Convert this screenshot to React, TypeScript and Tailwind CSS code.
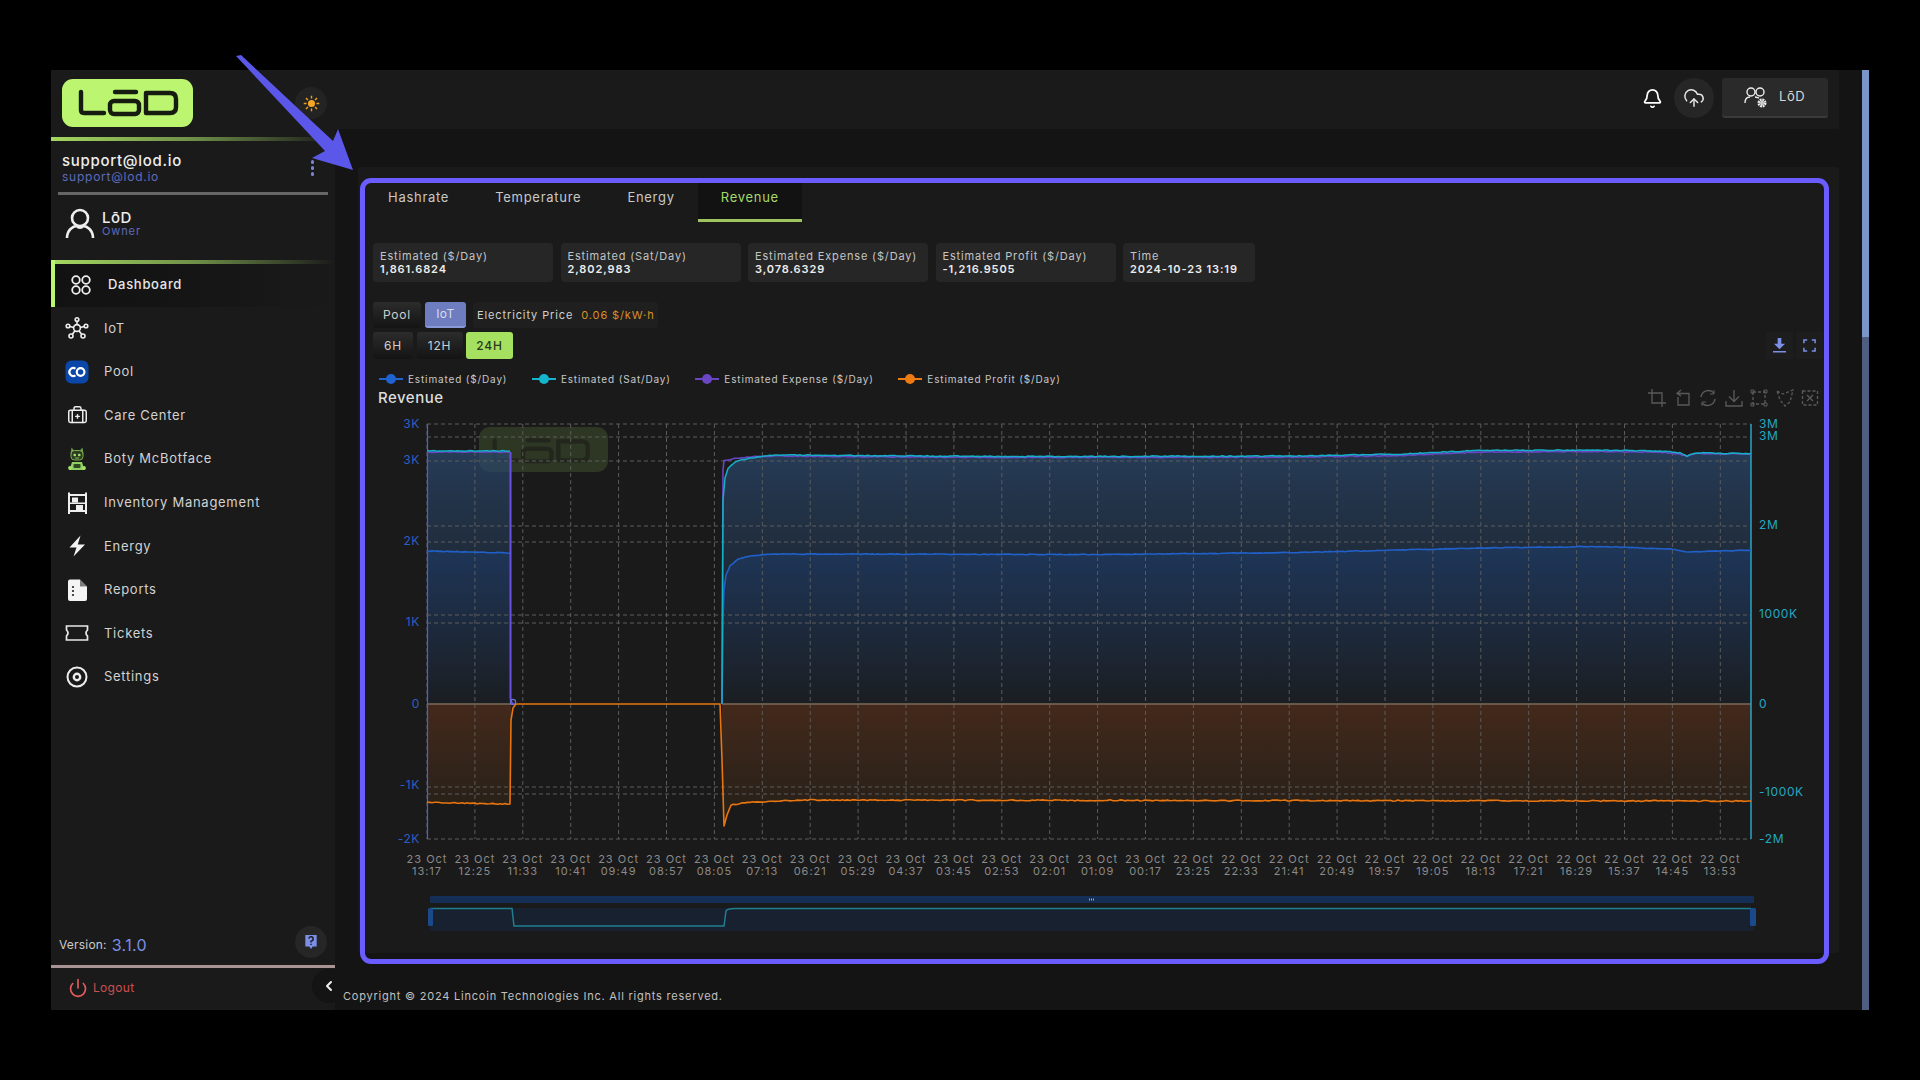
import React from "react";
import { BriefcaseMedical, Power, Bell, CloudUpload, ChevronLeft } from "lucide-react";

function rng(seed: number) {
  let s = seed;
  return () => {
    s = (s * 16807) % 2147483647;
    return s / 2147483647 - 0.5;
  };
}
type P = [number, number];
function series(pts: P[], noise: number, seed: number): P[] {
  const r = rng(seed);
  const out: P[] = [];
  for (let i = 0; i < pts.length - 1; i++) {
    const [x0, y0] = pts[i];
    const [x1, y1] = pts[i + 1];
    const len = x1 - x0;
    const steps = Math.max(1, Math.round(len / 2.5));
    const flat = y0 === 704 && y1 === 704;
    for (let k = 0; k < steps; k++) {
      const t = k / steps;
      const n = len > 6 && !flat ? r() * noise : 0;
      out.push([x0 + len * t, y0 + (y1 - y0) * t + n]);
    }
  }
  out.push(pts[pts.length - 1]);
  return out;
}
const toD = (p: P[]) => p.map((q, i) => `${i ? "L" : "M"}${q[0].toFixed(1)} ${q[1].toFixed(1)}`).join("");
const area = (p: P[]) => `${toD(p)}L${p[p.length - 1][0]} 704L${p[0][0]} 704Z`;

const cyanA = series([[427, 451], [510, 451]], 0.9, 11);
const cyanB = series([[722, 704], [723, 500], [725, 478], [728, 469], [735, 462], [750, 458], [775, 455], [1000, 456.5], [1300, 456], [1400, 454], [1480, 450.5], [1590, 450], [1660, 451], [1680, 453], [1687, 456], [1695, 453], [1751, 453.5]], 0.9, 23);
const purpleA = series([[427, 452], [510, 452]], 0.9, 37);
const purpleB = series([[722, 704], [723, 470], [724, 461], [735, 458], [750, 457], [775, 456], [1000, 457.5], [1300, 457], [1400, 455.5], [1480, 452], [1590, 451.5], [1660, 452], [1680, 454], [1687, 456.5], [1695, 453.5], [1751, 454]], 0.9, 41);
const blueA = series([[427, 551], [510, 553]], 0.7, 53);
const blueB = series([[722, 704], [723, 620], [724, 590], [726, 575], [730, 566], [738, 559], [750, 556], [770, 554], [1100, 554.5], [1300, 552.5], [1480, 548], [1600, 546.5], [1670, 549], [1688, 552], [1751, 550]], 0.7, 67);
const orange = series([[427, 802.5], [510, 804], [511, 720], [513, 708], [516, 704], [720, 704], [722, 760], [724, 826], [727, 815], [731, 805], [745, 802.5], [800, 800], [1200, 800.5], [1751, 801]], 1.1, 79);

const times = ["13:17", "12:25", "11:33", "10:41", "09:49", "08:57", "08:05", "07:13", "06:21", "05:29", "04:37", "03:45", "02:53", "02:01", "01:09", "00:17", "23:25", "22:33", "21:41", "20:49", "19:57", "19:05", "18:13", "17:21", "16:29", "15:37", "14:45", "13:53"];
const gridYs = [424, 437, 461, 526, 542, 615, 623, 787, 794, 839];
const leftLabels: [string, number][] = [["3K", 424], ["3K", 460], ["2K", 541], ["1K", 622], ["0", 704], ["-1K", 785], ["-2K", 839]];
const rightLabels: [string, number][] = [["3M", 424], ["3M", 436], ["2M", 525], ["1000K", 614], ["0", 704], ["-1000K", 792], ["-2M", 839]];

function LogoMarks({ stroke }: { stroke: string }) {
  return (
    <g fill="none" stroke={stroke} strokeWidth="4.4" strokeLinecap="round" strokeLinejoin="round">
      <path d="M19 13V31Q19 34 22 34H42" />
      <rect x="48" y="22" width="29" height="13" rx="4" />
      <path d="M53 13H74" />
      <path d="M84 14H108Q114 14 114 20V28Q114 34 108 34H84Z" />
    </g>
  );
}

function Chart() {
  return (
    <svg width="1481" height="530" viewBox="358 410 1481 530" className="block">
      <defs>
        <linearGradient id="b1" x1="0" y1="451" x2="0" y2="704" gradientUnits="userSpaceOnUse">
          <stop offset="0" stopColor="#2b4a72" stopOpacity="0.7" />
          <stop offset="1" stopColor="#1c2a3a" stopOpacity="0.25" />
        </linearGradient>
        <linearGradient id="b2" x1="0" y1="551" x2="0" y2="704" gradientUnits="userSpaceOnUse">
          <stop offset="0" stopColor="#1b4a96" stopOpacity="0.3" />
          <stop offset="1" stopColor="#1b4a96" stopOpacity="0" />
        </linearGradient>
        <linearGradient id="o1" x1="0" y1="704" x2="0" y2="802" gradientUnits="userSpaceOnUse">
          <stop offset="0" stopColor="#43291b" />
          <stop offset="1" stopColor="#2a2119" />
        </linearGradient>
      </defs>

      <rect x="479" y="427" width="129" height="45" rx="11" fill="#bcf56f" opacity="0.13" />
      <g transform="translate(476 428) scale(0.98 0.95)" opacity="0.45">
        <LogoMarks stroke="#141414" />
      </g>

      <path d={area(orange.filter((p) => p[0] <= 511))} fill="url(#o1)" />
      <path d={area(orange.filter((p) => p[0] >= 722))} fill="url(#o1)" />
      <path d={area(cyanA)} fill="url(#b1)" />
      <path d={area(cyanB)} fill="url(#b1)" />
      <path d={area(blueA)} fill="url(#b2)" />
      <path d={area(blueB)} fill="url(#b2)" />

      {gridYs.map((y) => (
        <line key={y} x1="427" x2="1751" y1={y} y2={y} stroke="#5c5c5c" strokeWidth="1" strokeDasharray="4 3" />
      ))}
      {times.map((_, i) => (
        <line key={i} x1={427 + i * 47.9} x2={427 + i * 47.9} y1="424" y2="839" stroke="#5c5c5c" strokeWidth="1" strokeDasharray="4 3" />
      ))}

      <line x1="427" x2="511" y1="704" y2="704" stroke="#7d6a58" strokeWidth="1.5" />
      <line x1="722" x2="1751" y1="704" y2="704" stroke="#7d6a58" strokeWidth="1.5" />
      <line x1="427.5" x2="427.5" y1="424" y2="839" stroke="#4a5ce0" strokeWidth="1.2" />
      <line x1="1751" x2="1751" y1="424" y2="839" stroke="#2aa4c4" strokeWidth="1.5" />

      <g fill="none" strokeLinejoin="round">
        <path d={toD(blueA)} stroke="#2060c8" strokeWidth="1.6" />
        <path d={toD(blueB)} stroke="#2060c8" strokeWidth="1.6" />
        <path d={toD(purpleA)} stroke="#6a45c4" strokeWidth="1.6" />
        <path d={toD(purpleB)} stroke="#6a45c4" strokeWidth="1.6" />
        <path d="M510.5 452V698Q511 704 514 704" stroke="#6a50e0" strokeWidth="2" />
        <circle cx="513" cy="702" r="2.6" stroke="#6a70d8" strokeWidth="1.2" />
        <path d={toD(cyanA)} stroke="#14b0c8" strokeWidth="1.5" />
        <path d={toD(cyanB)} stroke="#14b0c8" strokeWidth="1.5" />
        <path d={toD(orange)} stroke="#e8750f" strokeWidth="1.6" />
      </g>

      <g fontFamily="Inter, sans-serif" fontSize="12" letterSpacing="0.6">
        {leftLabels.map(([t, y], i) => (
          <text key={i} x="420" y={y + 4} textAnchor="end" fill="#2c5fc4">{t}</text>
        ))}
        {rightLabels.map(([t, y], i) => (
          <text key={i} x="1759" y={y + 4} fill="#22a8c4">{t}</text>
        ))}
      </g>
      <g fontFamily="Inter, sans-serif" fontSize="11" letterSpacing="1" fill="#8a8a8a" textAnchor="middle">
        {times.map((t, i) => (
          <g key={i}>
            <text x={427 + i * 47.9} y="863">{i < 16 ? "23 Oct" : "22 Oct"}</text>
            <text x={427 + i * 47.9} y="875">{t}</text>
          </g>
        ))}
      </g>

      <rect x="430" y="896" width="1324" height="7" rx="1" fill="#152e55" />
      <path d="M1089 899.5h6" stroke="#9aa8c0" strokeWidth="2" strokeDasharray="1 1" />
      <rect x="430" y="908" width="1324" height="23" fill="#18212f" />
      <path d="M430 908.5H512L514 926H724L726 911Q727 908.5 735 908.5H1751" fill="none" stroke="#1f7f90" strokeWidth="1.5" />
      <rect x="428" y="908" width="5" height="18" rx="1.5" fill="#1a4a8a" />
      <rect x="1750" y="908" width="6" height="18" rx="1.5" fill="#1a4a8a" />
    </svg>
  );
}

const iconCls = "w-[24px] h-[24px] shrink-0";
const DashIcon = () => (
  <svg viewBox="0 0 24 24" className={iconCls} fill="none" stroke="#eee" strokeWidth="1.8">
    <circle cx="7" cy="7" r="3.8" /><circle cx="17" cy="7" r="3.8" /><circle cx="7" cy="17" r="3.8" /><circle cx="17" cy="17" r="3.8" />
  </svg>
);
const IotIcon = () => (
  <svg viewBox="0 0 24 24" className={iconCls} fill="none" stroke="#eee" strokeWidth="1.6">
    <circle cx="12" cy="12" r="3.4" /><circle cx="12" cy="3.5" r="1.8" /><circle cx="3" cy="10" r="1.8" /><circle cx="21" cy="10" r="1.8" /><circle cx="6" cy="20" r="2" /><circle cx="18" cy="20" r="2" />
    <path d="M12 5.3V8.6M4.8 10.4L8.7 11.4M19.2 10.4L15.3 11.4M7.2 18.5L10 14.8M16.8 18.5L14 14.8" />
  </svg>
);
const PoolIcon = () => (
  <svg viewBox="0 0 24 24" className={iconCls}>
    <rect x="0.5" y="0.5" width="23" height="23" rx="6" fill="#0b47a8" />
    <path d="M10.5 8.6A4 4 0 1 0 10.5 15.4" fill="none" stroke="#fff" strokeWidth="2.2" />
    <circle cx="15.6" cy="12" r="3.8" fill="none" stroke="#fff" strokeWidth="2.2" />
  </svg>
);
const BotIcon = () => (
  <svg viewBox="0 0 24 24" className={iconCls}>
    <path d="M6.5 0.5L10 4.5H14L17.5 0.5L18.5 7H5.5Z" fill="#6f9f48" />
    <rect x="6" y="3.5" width="12" height="9.5" rx="3.5" fill="#2c3d22" stroke="#7fb050" strokeWidth="1" />
    <circle cx="9.7" cy="8" r="1.3" fill="#a8e070" /><circle cx="14.3" cy="8" r="1.3" fill="#a8e070" />
    <path d="M10 11H14" stroke="#a8e070" strokeWidth="0.8" />
    <path d="M7 15H17L19.5 23H4.5Z" fill="#8fd060" />
    <rect x="8.5" y="17" width="7" height="4" rx="1" fill="#2d4a24" />
    <circle cx="5" cy="21" r="1.9" fill="#a8e070" /><circle cx="19" cy="21" r="1.9" fill="#a8e070" />
  </svg>
);
const ShelfIcon = () => (
  <svg viewBox="0 0 24 24" className={iconCls} fill="#eee">
    <path d="M3 1.5H5V23H3ZM20 1.5H22V23H20ZM3 3H22V5H3ZM3 11.5H22V13H3ZM3 19H22V21H3Z" />
    <rect x="7" y="6.5" width="6" height="5" /><rect x="11" y="14" width="7" height="5" />
  </svg>
);
const BoltIcon = () => (
  <svg viewBox="0 0 24 24" className={iconCls} fill="#f2f2f2">
    <path d="M15.5 1.5L4.5 13.5H11.5L8.5 22.5L20 10.5H12.8Z" />
  </svg>
);
const ReportIcon = () => (
  <svg viewBox="0 0 24 24" className={iconCls}>
    <path d="M5 1.5H15L22 8.5V21A2 2 0 0 1 20 23H5A2 2 0 0 1 3 21V3.5A2 2 0 0 1 5 1.5Z" fill="#f4f4f4" />
    <path d="M15 1.5V8.5H22Z" fill="#1a1a1a" opacity="0.55" />
    <circle cx="8" cy="9" r="1.1" fill="#222" /><circle cx="8" cy="13" r="1.1" fill="#222" /><circle cx="8" cy="17" r="1.1" fill="#222" />
  </svg>
);
const TicketIcon = () => (
  <svg viewBox="0 0 24 24" className={iconCls} fill="none" stroke="#e8e8e8" strokeWidth="1.7">
    <path d="M1.5 5H22.5V9Q19.5 12 22.5 15V19H1.5V15Q4.5 12 1.5 9Z" />
  </svg>
);
const GearRing = () => (
  <svg viewBox="0 0 24 24" className={iconCls} fill="none" stroke="#eee">
    <circle cx="12" cy="12" r="9.5" strokeWidth="2" /><circle cx="12" cy="12" r="3.2" strokeWidth="2.4" />
  </svg>
);
const CareIcon = () => (
  <div className="w-[24px] h-[24px] shrink-0 flex items-center justify-center">
    <BriefcaseMedical className="w-[21px] h-[21px]" color="#eee" strokeWidth={1.7} />
  </div>
);

const nav: [string, React.ReactNode][] = [
  ["IoT", <IotIcon />],
  ["Pool", <PoolIcon />],
  ["Care Center", <CareIcon />],
  ["Boty McBotface", <BotIcon />],
  ["Inventory Management", <ShelfIcon />],
  ["Energy", <BoltIcon />],
  ["Reports", <ReportIcon />],
  ["Tickets", <TicketIcon />],
  ["Settings", <GearRing />],
];

function Sidebar() {
  return (
    <aside className="relative z-10 w-[284px] shrink-0 h-full flex flex-col bg-[#1a1a1a]">
      <div className="h-[67px] flex items-center pl-[11px] pr-[8px] pb-[1px]">
        <svg width="131" height="48" viewBox="0 0 131 48">
          <rect width="131" height="48" rx="11" fill="#bcf56f" />
          <LogoMarks stroke="#171c10" />
        </svg>
        <div className="ml-auto w-[32px] h-[32px] rounded-full bg-[#232323] flex items-center justify-center">
          <svg viewBox="0 0 24 24" className="w-[17px] h-[17px]" fill="none" stroke="#f0a020" strokeWidth="2">
            <circle cx="12" cy="12" r="5" fill="#f5a623" stroke="none" />
            <path d="M12 1V5M12 19V23M1 12H5M19 12H23M4.2 4.2L7 7M17 17L19.8 19.8M4.2 19.8L7 17M17 7L19.8 4.2" />
          </svg>
        </div>
      </div>
      <div className="h-[4px] bg-linear-to-r from-[#a4d860] via-[#6f8f48] to-transparent" />

      <div className="h-[51px] flex items-center pl-[11px] pr-[21px] pt-[3px]">
        <div className="flex flex-col">
          <span className="text-[15px] leading-[18px] tracking-[0.7px] text-[#eeeeee] font-medium">support@lod.io</span>
          <span className="text-[12px] leading-[14px] tracking-[0.75px] text-[#5f6bb8]">support@lod.io</span>
        </div>
        <div className="ml-auto flex flex-col gap-[2.5px]">
          <i className="block w-[3.5px] h-[3.5px] rounded-full bg-[#7a86d8]" />
          <i className="block w-[3.5px] h-[3.5px] rounded-full bg-[#7a86d8]" />
          <i className="block w-[3.5px] h-[3.5px] rounded-full bg-[#7a86d8]" />
        </div>
      </div>
      <div className="h-[3px] mx-[7px] bg-[#666666]" />

      <div className="h-[65px] flex items-center pl-[14px] gap-[7px] pb-[8px]">
        <svg viewBox="0 0 30 32" className="w-[30px] h-[32px]" fill="none" stroke="#efefef" strokeWidth="2.6">
          <circle cx="15" cy="10" r="8" />
          <path d="M2 30C2 22 8 18 12 18A3.5 3.5 0 0 0 18 18C22 18 28 22 28 30" />
        </svg>
        <div className="flex flex-col">
          <span className="text-[15px] leading-[15px] tracking-[0.5px] text-[#eeeeee] font-medium">LōD</span>
          <span className="text-[11px] leading-[13px] tracking-[0.9px] text-[#5f6bb8]">Owner</span>
        </div>
      </div>

      <div className="border-l-[4px] border-[#bcf56f]">
        <div className="h-[4px] bg-linear-to-r from-[#a4d860] via-[#6f8f48] to-transparent" />
        <div className="h-[43px] flex items-center bg-linear-to-r from-[#121212] via-[#151515] to-[#1a1a1a] pl-[14px] gap-[15px] pb-[1px]">
          <DashIcon />
          <span className="text-[13px] tracking-[0.7px] text-[#e6e6e6] font-medium">Dashboard</span>
        </div>
      </div>

      <nav className="flex flex-col mt-[-0.5px]">
        {nav.map(([label, icon]) => (
          <div key={label} className="h-[43.6px] flex items-center pl-[14px] gap-[15px]">
            {icon}
            <span className="text-[13px] tracking-[0.72px] text-[#d2d2d2]">{label}</span>
          </div>
        ))}
      </nav>

      <div className="flex-1" />
      <div className="h-[40px] flex items-center pl-[8px] pr-[8px]">
        <span className="text-[12px] tracking-[0.2px] text-[#cccccc]">Version:</span>
        <span className="text-[16px] tracking-[0.3px] text-[#7b8fe8] ml-[5px]">3.1.0</span>
        <div className="ml-auto w-[32px] h-[32px] rounded-full bg-[#262626] flex items-center justify-center mb-[6px]">
          <svg viewBox="0 0 16 18" className="w-[14px] h-[16px]">
            <path d="M1.5 1H14.5V14H10L8 17L6 14H1.5Z" fill="#7b8fe8" />
            <path d="M5.5 5.2A2.5 2.5 0 1 1 8 8V9.5M8 11V12.5" fill="none" stroke="#1a1a1a" strokeWidth="1.6" />
          </svg>
        </div>
      </div>
      <div className="h-[3px] bg-[#a89494]" />
      <div className="h-[42px] flex items-center pl-[17px] gap-[5px] pb-[2px]">
        <Power className="w-[20px] h-[20px]" color="#e25c5c" strokeWidth={2} />
        <span className="text-[12px] tracking-[0.3px] text-[#cc5050]">Logout</span>
      </div>
      <div className="absolute left-[261px] bottom-[7px] w-[34px] h-[34px] rounded-full bg-[#141414] flex items-center justify-center">
        <ChevronLeft className="w-[16px] h-[18px]" color="#f0f0f0" strokeWidth={3} />
      </div>
    </aside>
  );
}

function Header() {
  return (
    <header className="h-[59px] mr-[23px] flex items-center justify-end bg-[#1a1a1a] pr-[11px] pb-[3px]">
      <Bell className="w-[21px] h-[21px] mr-[11px]" color="#fff" strokeWidth={2} />
      <div className="w-[40px] h-[40px] rounded-full bg-[#262626] flex items-center justify-center mr-[8px]">
        <CloudUpload className="w-[22px] h-[22px]" color="#e8e8e8" strokeWidth={1.6} />
      </div>
      <div className="w-[106px] h-[40px] rounded-[3px] bg-[#2a2a2a] border-b-[2px] border-[#3a3a3a] flex items-center pl-[22px] gap-[11px]">
        <svg viewBox="0 0 24 24" className="w-[24px] h-[24px]" fill="none" stroke="#eee" strokeWidth="1.4">
          <circle cx="7" cy="7" r="4" /><circle cx="16" cy="7" r="4" />
          <path d="M1 18C1 14 3 12 6 12M11 12C13 12 14 13 15 13" />
          <circle cx="18" cy="18" r="3.2" strokeWidth="2.6" strokeDasharray="1.8 0.7" />
          <circle cx="18" cy="18" r="1.2" />
        </svg>
        <span className="text-[13px] tracking-[0.6px] text-[#d8d8d8]">LōD</span>
      </div>
    </header>
  );
}

const stats: [string, string, string][] = [
  ["Estimated ($/Day)", "1,861.6824", "w-[180px]"],
  ["Estimated (Sat/Day)", "2,802,983", "w-[180px]"],
  ["Estimated Expense ($/Day)", "3,078.6329", "w-[180px]"],
  ["Estimated Profit ($/Day)", "-1,216.9505", "w-[180px]"],
  ["Time", "2024-10-23 13:19", "w-[132px]"],
];

function Tabs() {
  return (
    <div className="flex h-[39px] pl-[7px] mt-[16px] text-[13px] tracking-[0.72px] text-[#c8c8c8]">
      <div className="px-[23px] h-full pt-[5px]">Hashrate</div>
      <div className="px-[23px] h-full pt-[5px]">Temperature</div>
      <div className="px-[23px] h-full pt-[5px]">Energy</div>
      <div className="px-[23px] h-full pt-[5px] bg-[#121212] text-[#a5d86a] border-b-[3px] border-[#9ec35f]">Revenue</div>
    </div>
  );
}

const btnDark = "h-full flex items-center justify-center rounded-[3px] bg-linear-to-b from-[#2c2c2c] to-[#141414] text-[12px] tracking-[0.8px] text-[#cfcfcf]";

function Legend() {
  const items: [string, string][] = [
    ["Estimated ($/Day)", "#1f63d0"],
    ["Estimated (Sat/Day)", "#13b5cf"],
    ["Estimated Expense ($/Day)", "#6a45c4"],
    ["Estimated Profit ($/Day)", "#ee7a12"],
  ];
  return (
    <div className="flex items-center h-[14px] mt-[13px] pl-[21px] gap-[24.5px] text-[10px] tracking-[0.85px] text-[#c8c8c8]">
      {items.map(([t, c]) => (
        <div key={t} className="flex items-center gap-[5px]">
          <svg width="24" height="12" viewBox="0 0 24 12">
            <line x1="0" x2="24" y1="6" y2="6" stroke={c} strokeWidth="2" />
            <circle cx="12" cy="6" r="5" fill={c} />
          </svg>
          <span>{t}</span>
        </div>
      ))}
    </div>
  );
}

function Toolbox() {
  const c = "w-[18px] h-[18px]";
  return (
    <div className="flex items-center gap-[7.5px]">
      <svg viewBox="0 0 18 18" className={c} fill="none" stroke="#5a5a5a" strokeWidth="1.3"><path d="M4 0V14H18M0 4H14V18" /></svg>
      <svg viewBox="0 0 18 18" className={c} fill="none" stroke="#5a5a5a" strokeWidth="1.3"><path d="M7 1L3 4.5L7 7M3 4.5H15V16H4V8" /></svg>
      <svg viewBox="0 0 18 18" className={c} fill="none" stroke="#5a5a5a" strokeWidth="1.5"><path d="M2 8A7.5 7.5 0 0 1 15 4M16 10A7.5 7.5 0 0 1 3 14" /><path d="M15 1V5H11M3 17V13H7" strokeWidth="1" /></svg>
      <svg viewBox="0 0 18 18" className={c} fill="none" stroke="#5a5a5a" strokeWidth="1.3"><path d="M9 1V12M4 7.5L9 12.5L14 7.5M1 12V17H17V12" /></svg>
      <svg viewBox="0 0 18 18" className={c} fill="none" stroke="#5a5a5a" strokeWidth="1.3"><rect x="3" y="3" width="12" height="12" strokeDasharray="3 2" /><path d="M1 1h3v3H1zM14 1h3v3h-3zM1 14h3v3H1zM14 14h3v3h-3z" strokeWidth="1" /></svg>
      <svg viewBox="0 0 18 18" className={c} fill="none" stroke="#5a5a5a" strokeWidth="1.3"><path d="M1 2L7 5L17 1L14 13L9 17L4 11Z" strokeDasharray="3 2" /></svg>
      <svg viewBox="0 0 18 18" className={c} fill="none" stroke="#5a5a5a" strokeWidth="1.3"><rect x="1.5" y="2" width="15" height="14" strokeDasharray="3 2" /><path d="M6 6L12 12M12 6L6 12" /></svg>
    </div>
  );
}

function Card() {
  return (
    <section className="h-[786px] mx-[23px] bg-[#1a1a1a] rounded-[3px] overflow-hidden">
      <Tabs />
      <div className="flex gap-[7.5px] pl-[15px] mt-[21px]">
        {stats.map(([a, b, w]) => (
          <div key={a} className={`${w} h-[39px] rounded-[4px] bg-[#262626] pl-[7px] pt-[7px] text-[11px] leading-[13px] tracking-[0.85px]`}>
            <div className="text-[#c4c4c4]">{a}</div>
            <div className="text-[#ececec] font-semibold tracking-[0.9px]">{b}</div>
          </div>
        ))}
      </div>
      <div className="flex h-[26px] gap-[4px] pl-[15px] mt-[20px]">
        <div className={`${btnDark} w-[48px]`}>Pool</div>
        <div className="h-full w-[41px] flex items-center justify-center rounded-[3px] bg-[#6e7cc0] border-b-[2px] border-[#8a98d8] text-[12px] text-[#d8dcf0] tracking-[0.5px]">IoT</div>
        <div className="h-full w-[185px] ml-[3px] rounded-[3px] bg-[#1f1f1f] flex items-center pl-[4px] text-[11px] tracking-[0.88px] text-[#d0d0d0] whitespace-nowrap">
          Electricity Price
          <span className="ml-[8px] text-[#d89028]">0.06 $/kW·h</span>
        </div>
      </div>
      <div className="flex items-center h-[27px] gap-[3.5px] pl-[15px] pr-[16px] mt-[4px]">
        <div className={`${btnDark} w-[40px]`}>6H</div>
        <div className={`${btnDark} w-[46px]`}>12H</div>
        <div className="h-full w-[47px] flex items-center justify-center rounded-[3px] bg-[#a6e060] text-[12px] tracking-[0.8px] text-[#2a3a1a] font-medium">24H</div>
        <div className="ml-auto w-[27px] h-full bg-[#1d1d1d] flex items-center justify-center">
          <svg viewBox="0 0 14 16" className="w-[13px] h-[15px]" fill="#7b8fe8"><path d="M5 0H9V6H13L7 12L1 6H5ZM0 14H14V15.5H0Z" /></svg>
        </div>
        <div className="w-[27px] h-full bg-[#1d1d1d] flex items-center justify-center">
          <svg viewBox="0 0 14 14" className="w-[13px] h-[13px]" fill="none" stroke="#7b8fe8" strokeWidth="1.6"><path d="M1 4.5V1H4.5M9.5 1H13V4.5M13 9.5V13H9.5M4.5 13H1V9.5" /></svg>
        </div>
      </div>
      <Legend />
      <div className="flex items-center justify-between h-[20px] mt-[2px] pl-[20px] pr-[20px]">
        <span className="text-[15px] tracking-[0.5px] text-[#dddddd] font-medium">Revenue</span>
        <Toolbox />
      </div>
      <div className="mt-[2px]">
        <Chart />
      </div>
    </section>
  );
}

export default function App() {
  return (
    <div className="relative w-[1920px] h-[1080px] overflow-hidden bg-black font-['Inter',sans-serif] pt-[70px] pl-[51px]">
      <div className="flex w-[1818px] h-[940px]">
        <Sidebar />
        <main className="flex-1 bg-[#141414] flex flex-col min-w-0">
          <Header />
          <div className="pt-[38px]">
            <Card />
          </div>
          <footer className="mt-[35px] pl-[8px] text-[11px] leading-[16px] tracking-[0.78px] text-[#c0c0c0]">
            Copyright © 2024 Lincoin Technologies Inc. All rights reserved.
          </footer>
        </main>
        <div className="w-[7px] h-full flex flex-col bg-[#4e5d80]">
          <div className="h-[267px] bg-[#7a96c8]" />
        </div>
      </div>

      <div className="absolute z-20 left-[360px] top-[178px] w-[1469px] h-[786px] border-[5px] border-[#6a5cff] rounded-[11px] pointer-events-none" />
      <svg className="absolute z-20 left-0 top-0 w-[1920px] h-[1080px] pointer-events-none" viewBox="0 0 1920 1080">
        <path d="M241 55L333 141L338 129L353 170L312 158L325 151L236 56Z" fill="#5b57e8" />
      </svg>
    </div>
  );
}
